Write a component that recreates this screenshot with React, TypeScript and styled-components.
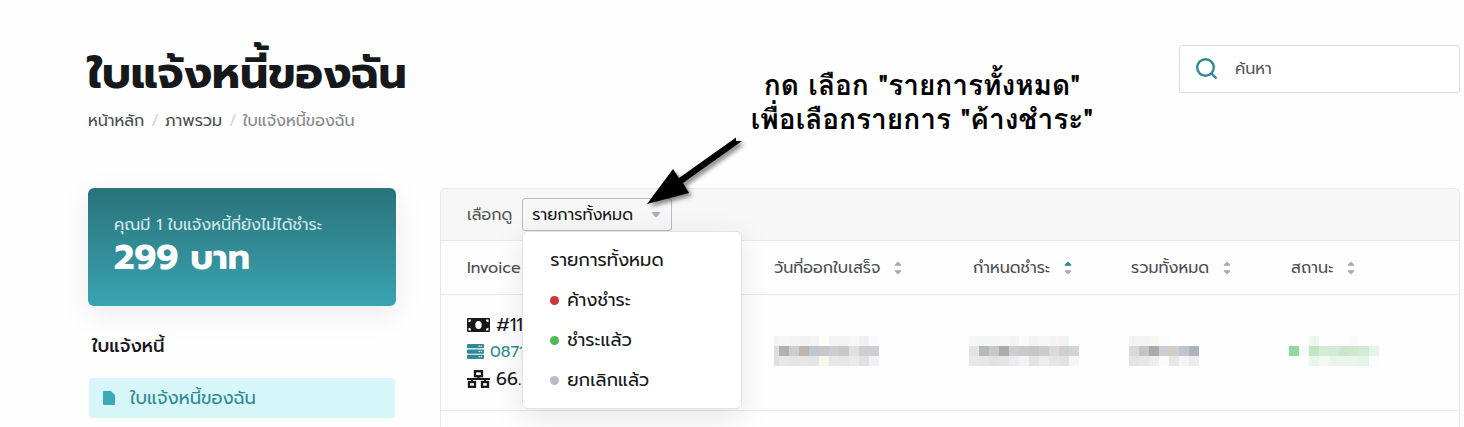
import React from "react";
import styled, { createGlobalStyle, css } from "styled-components";
import { FaServer } from "react-icons/fa";

const GlobalStyle = createGlobalStyle`
  *, *::before, *::after { box-sizing: border-box; }
  body {
    margin: 0;
    background: #fefefe;
    color: #16181b;
    font-family: Prompt, "Noto Sans Thai", "Open Sans", "Noto Sans", sans-serif;
    font-size: 16px;
    line-height: 24px;
  }
  h1, h2, p, ul, ol { margin: 0; padding: 0; }
  ul, ol { list-style: none; }
  a { color: inherit; text-decoration: none; }
  button, input { font: inherit; color: inherit; }
`;

const Page = styled.div`
  position: relative;
  display: flex;
  flex-direction: column;
  min-height: 100vh;
  padding: 44px 4px 0 88px;
`;

const Header = styled.header`
  display: flex;
  justify-content: space-between;
  align-items: flex-start;
  height: 144px;
`;

const Title = styled.h1`
  font-size: 44px;
  line-height: 60px;
  font-weight: 700;
  white-space: nowrap;
`;

const Crumbs = styled.ol`
  display: flex;
  gap: 7px;
  margin-top: 5px;
  color: #4a4c50;

  li + li::before {
    content: "/";
    margin-right: 6px;
    color: #d4d6da;
  }
  li:last-child { color: #85878c; }
`;

const SearchBox = styled.label`
  display: flex;
  align-items: center;
  gap: 16px;
  width: 281px;
  height: 48px;
  margin-top: 1px;
  padding: 0 16px;
  border: 1px solid #dcdcdc;
  border-radius: 3px;
  background: #fff;

  svg { flex: none; }
`;

const SearchInput = styled.input`
  flex: 1;
  min-width: 0;
  padding: 0;
  border: 0;
  outline: 0;
  background: transparent;
  &::placeholder { color: #55575b; opacity: 1; }
`;

const Columns = styled.div`
  flex: 1;
  display: flex;
  gap: 44px;
`;

const Sidebar = styled.aside`
  flex: none;
  width: 308px;
`;

const BalanceCard = styled.section`
  height: 118px;
  padding: 25px 26px;
  border-radius: 6px;
  background: linear-gradient(#29737a, #3aa3b1);
  box-shadow: 0 8px 30px rgba(0, 0, 0, 0.08);
  color: #d3e7e9;
  white-space: nowrap;
`;

const Amount = styled.strong`
  display: block;
  color: #fff;
  font-size: 35px;
  line-height: 42px;
`;

const SideTitle = styled.h2`
  margin: 28px 4px 20px;
  font-size: 18px;
  line-height: 24px;
  font-weight: 500;
`;

const SideLink = styled.a`
  display: flex;
  align-items: center;
  gap: 15px;
  height: 40px;
  margin: 0 1px;
  padding: 0 14px;
  border-radius: 4px;
  background: #d7f6f9;
  color: #2f8a96;
  font-size: 18px;
`;

const Panel = styled.main`
  flex: 1;
  min-width: 0;
  border: 1px solid #e7e7e7;
  border-bottom: 0;
  border-radius: 6px 6px 0 0;
`;

const Toolbar = styled.div`
  display: flex;
  align-items: center;
  gap: 10px;
  height: 52px;
  padding-left: 26px;
  border-bottom: 1px solid #e7e7e7;
  border-radius: 6px 6px 0 0;
  background: #f7f7f7;
  color: #55575b;
`;

const Filter = styled.div`
  position: relative;
`;

const FilterButton = styled.button`
  display: flex;
  align-items: center;
  justify-content: space-between;
  width: 150px;
  height: 33px;
  padding: 0 11px 0 9px;
  border: 1px solid #b7b9c6;
  border-radius: 3px;
  background: transparent;
  color: #16181b;
  white-space: nowrap;
`;

const Menu = styled.ul`
  position: absolute;
  z-index: 1;
  top: 100%;
  left: 0;
  width: 220px;
  padding: 8px 0;
  border: 1px solid #e4e4e4;
  border-radius: 6px;
  background: #fff;
  box-shadow: 0 8px 30px rgba(0, 0, 0, 0.1);
`;

const MenuItem = styled.button`
  display: flex;
  align-items: center;
  gap: 8px;
  width: 100%;
  height: 40px;
  padding: 0 27px;
  border: 0;
  background: none;
  color: #16181b;
  font-size: 18px;
`;

const Dot = styled.span<{ $color: string }>`
  width: 9px;
  height: 9px;
  border-radius: 50%;
  background: ${(p) => p.$color};
`;

const Table = styled.table`
  width: 100%;
  table-layout: fixed;
  border-collapse: separate;
  border-spacing: 0;
`;

const cell = css`
  padding: 0;
  border-bottom: 1px solid #e7e7e7;
  text-align: left;
  white-space: nowrap;
  &:first-child { padding-left: 26px; }
`;

const HeadCell = styled.th`
  ${cell}
  height: 54px;
  color: #4c4e52;
  font-weight: 400;
`;

const Cell = styled.td`
  ${cell}
  height: 116px;
  padding-bottom: 2px;
  vertical-align: middle;
`;

const SortButton = styled.button`
  display: inline-flex;
  align-items: center;
  gap: 14px;
  padding: 0;
  border: 0;
  background: none;
`;

const Col = styled.col<{ $width?: number }>`
  width: ${(p) => (p.$width ? `${p.$width}px` : "auto")};
`;

const Line = styled.div<{ $tone?: "link" }>`
  display: flex;
  align-items: center;
  gap: 6px;
  height: 27px;
  font-size: ${(p) => (p.$tone ? "16px" : "18px")};
  color: ${(p) => (p.$tone ? "#2f8a96" : "#16181b")};
`;

const Mosaic = styled.svg`
  display: block;
`;

const Note = styled.p`
  position: absolute;
  top: 68px;
  left: 740px;
  width: 364px;
  color: #000;
  font-family: Loma, "Liberation Sans", sans-serif;
  font-size: 28px;
  line-height: 34px;
  font-weight: 700;
  text-align: center;
  white-space: nowrap;
`;

const Arrow = styled.svg`
  position: absolute;
  z-index: 2;
  top: 130px;
  left: 640px;
  pointer-events: none;
`;

const SortIcon = ({ active }: { active?: boolean }) => (
  <svg width="8" height="14" viewBox="0 0 8 14" strokeLinejoin="round" aria-hidden="true">
    <path d="M1 4.300 3.500 1.300h1L7 4.300Z" fill={active ? "#2f8a96" : "#a9acb8"} stroke={active ? "#2f8a96" : "#a9acb8"} />
    <path d="M1 9.700 3.500 12.700h1L7 9.700Z" fill="#a9acb8" stroke="#a9acb8" />
  </svg>
);

const MoneyIcon = () => (
  <svg width="23" height="14" viewBox="0 0 23 14" aria-hidden="true">
    <rect width="23" height="14" rx="1" fill="#16181b" />
    <ellipse cx="11.5" cy="7" rx="3.2" ry="4" fill="#fff" />
    <path d="M1.500 4.200V1.500H4A2.600 2.600 0 0 1 1.500 4.200M1.500 9.800v2.700H4a2.600 2.600 0 0 0-2.500-2.700M21.500 4.200V1.500H19a2.600 2.600 0 0 0 2.500 2.700M21.500 9.800v2.700H19a2.600 2.600 0 0 1 2.500-2.700" fill="#fff" />
  </svg>
);

const NetworkIcon = () => (
  <svg width="23" height="18" viewBox="0 0 23 18" fill="none" stroke="#16181b" strokeWidth="2.300" aria-hidden="true">
    <rect x="8" y="1.200" width="7" height="5" />
    <rect x="2" y="12" width="6" height="4.800" />
    <rect x="15" y="12" width="6" height="4.800" />
    <path d="M0 9h23M11.500 6v3M5 9v3M18 9v3" strokeWidth="2" />
  </svg>
);

const CLEAR = "none";
const mosaics: Record<string, { lead?: number; rows: string[][] }> = {
  date: {
    lead: 5,
    rows: [
      ["#f3f3f3", "#f6f6f7", "#f3f3f3", "#f2f2f4", "#f4f4f4", "#fefcf9", "#f4f4f5", "#f3f3f3", "#f7f7f8", "#f1f1f2", "#f8fafe"],
      ["#dfdcd9", "#aeb0b2", "#cdcdce", "#bdb5b0", "#bfc6d0", "#c8c7cb", "#cdcdcf", "#c8c9cb", "#dfdfdc", "#cdced0", "#cdced0"],
      ["#dedede", "#e7e7e7", "#e5e5e5", "#e5e6e8", "#e5e5e5", "#f8f5f1", "#e7e7e8", "#e6e6e7", "#ebebeb", "#e1e1e1", "#f0f1f4"],
    ],
  },
  due: {
    rows: [
      ["#f5f5f3", "#f4f5f6", "#f4f5f5", "#f5f6f6", "#f4f4f5", "#fafaf8", "#f3f3f3", "#f4f6fa", "#f4f4f3", "#f2f2f1", "#fbfefe"],
      ["#e5e4e1", "#b5b9bc", "#cac7c4", "#acacac", "#cccdd2", "#c8cacc", "#c9c6c2", "#cacccd", "#dbd9d9", "#cfcfd1", "#d3d4d9"],
      ["#e9e8e6", "#e7e7e7", "#e2e2e2", "#e5e5e5", "#eaecef", "#f4f2ee", "#e3e3e3", "#eaecee", "#e5e5e5", "#e1e1e1", "#f5f6f8"],
    ],
  },
  total: {
    rows: [
      ["#f3f3f3", "#f3f3f3", "#f5f5f2", "#fafdfc", CLEAR, CLEAR, CLEAR],
      ["#dcd8d5", "#c0c5c9", "#a8a9ab", "#cdced2", "#d4cdc7", "#bcc4cf", "#b0b2b5"],
      ["#e3e3e3", "#e7e7e7", "#ededed", "#fafbfe", "#e7e7e7", "#f4f4f4", "#ececec"],
    ],
  },
  status: {
    rows: [
      [CLEAR, CLEAR, "#eef7ef", CLEAR, CLEAR, CLEAR, "#fafbf8", CLEAR, CLEAR],
      ["#93d99b", "#f5fbf7", "#c1e5c1", "#d6ebd1", "#d0ecd8", "#cbe7cb", "#cfe8c8", "#d0ecd9", "#e5f5eb"],
      [CLEAR, CLEAR, "#e9f5eb", "#f3f8f1", "#e9f5ec", "#e9f5ec", "#e9f5eb", "#e3f4e8", "#fafdfb"],
    ],
  },
};

const Pixels = ({ name }: { name: string }) => {
  const { lead = 10, rows } = mosaics[name];
  const width = lead + (rows[0].length - 1) * 10;
  return (
    <Mosaic width={width} height="30" shapeRendering="crispEdges" aria-hidden="true">
      {rows.map((row, y) =>
        row.map((fill, x) => (
          <rect
            key={`${x}-${y}`}
            x={x === 0 ? 0 : lead + (x - 1) * 10}
            y={y * 10}
            width={x === 0 ? lead : 10}
            height="10"
            fill={fill}
          />
        ))
      )}
    </Mosaic>
  );
};

const PixelCell = styled(Cell)<{ $shift: number }>`
  padding-bottom: 4px;
  ${Mosaic} { margin-left: ${(p) => p.$shift}px; }
`;

const columns = [
  { label: "วันที่ออกใบเสร็จ" },
  { label: "กำหนดชำระ", active: true },
  { label: "รวมทั้งหมด" },
  { label: "สถานะ" },
];

const statuses = [
  { label: "รายการทั้งหมด" },
  { label: "ค้างชำระ", color: "#d13438" },
  { label: "ชำระแล้ว", color: "#4cba55" },
  { label: "ยกเลิกแล้ว", color: "#b9bbc6" },
];

export default function App() {
  return (
    <Page>
      <GlobalStyle />
      <Header>
        <div>
          <Title>ใบแจ้งหนี้ของฉัน</Title>
          <nav>
            <Crumbs>
              <li><a href="#home">หน้าหลัก</a></li>
              <li><a href="#overview">ภาพรวม</a></li>
              <li>ใบแจ้งหนี้ของฉัน</li>
            </Crumbs>
          </nav>
        </div>
        <SearchBox>
          <svg width="23" height="23" viewBox="0 0 23 23" fill="none" stroke="#2f8a96" strokeWidth="2.400" aria-hidden="true">
            <circle cx="9.500" cy="9.500" r="8.300" />
            <path d="m15.500 15.500 5 5" />
          </svg>
          <SearchInput type="search" placeholder="ค้นหา" aria-label="ค้นหา" />
        </SearchBox>
      </Header>

      <Columns>
        <Sidebar>
          <BalanceCard>
            <p>คุณมี 1 ใบแจ้งหนี้ที่ยังไม่ได้ชำระ</p>
            <Amount>299 บาท</Amount>
          </BalanceCard>
          <SideTitle>ใบแจ้งหนี้</SideTitle>
          <SideLink href="#invoices">
            <svg width="12" height="14" viewBox="0 0 12 14" aria-hidden="true">
              <path d="M1 0h7l4 4v9a1 1 0 0 1-1 1H1a1 1 0 0 1-1-1V1a1 1 0 0 1 1-1" fill="#3aabb6" />
            </svg>
            ใบแจ้งหนี้ของฉัน
          </SideLink>
        </Sidebar>

        <Panel>
          <Toolbar>
            <span>เลือกดู</span>
            <Filter>
              <FilterButton type="button" aria-haspopup="true" aria-expanded="true">
                รายการทั้งหมด
                <svg width="8" height="5" viewBox="0 0 8 5" aria-hidden="true">
                  <path d="M0 0h8v1L4.500 5h-1L0 1Z" fill="#a9acb8" />
                </svg>
              </FilterButton>
              <Menu>
                {statuses.map(({ label, color }) => (
                  <li key={label}>
                    <MenuItem type="button">
                      {color && <Dot $color={color} />}
                      {label}
                    </MenuItem>
                  </li>
                ))}
              </Menu>
            </Filter>
          </Toolbar>
          <Table>
            <colgroup>
              <Col $width={333} />
              <Col $width={199} />
              <Col $width={158} />
              <Col $width={160} />
              <Col />
            </colgroup>
            <thead>
              <tr>
                <HeadCell>Invoice</HeadCell>
                {columns.map(({ label, active }) => (
                  <HeadCell key={label}>
                    <SortButton type="button">
                      {label}
                      <SortIcon active={active} />
                    </SortButton>
                  </HeadCell>
                ))}
              </tr>
            </thead>
            <tbody>
              <tr>
                <Cell>
                  <Line><MoneyIcon />#11</Line>
                  <Line $tone="link"><FaServer size={17} />0871</Line>
                  <Line><NetworkIcon />66.2</Line>
                </Cell>
                <PixelCell $shift={0}><Pixels name="date" /></PixelCell>
                <PixelCell $shift={-4}><Pixels name="due" /></PixelCell>
                <PixelCell $shift={-2}><Pixels name="total" /></PixelCell>
                <PixelCell $shift={-2}><Pixels name="status" /></PixelCell>
              </tr>
            </tbody>
          </Table>
        </Panel>
      </Columns>

      <Note>
        กด เลือก "รายการทั้งหมด"<br />เพื่อเลือกรายการ "ค้างชำระ"
      </Note>
      <Arrow width="120" height="84" viewBox="0 0 120 84" aria-hidden="true">
        <defs>
          <filter id="soft" x="-20%" y="-20%" width="140%" height="140%">
            <feDropShadow dx="3" dy="3" stdDeviation="2" floodOpacity="0.45" />
          </filter>
        </defs>
        <path d="M7 74 33 39l6 9L96 7.500v3.500h6L43 53l6 10Z" fill="#000" filter="url(#soft)" />
      </Arrow>
    </Page>
  );
}
